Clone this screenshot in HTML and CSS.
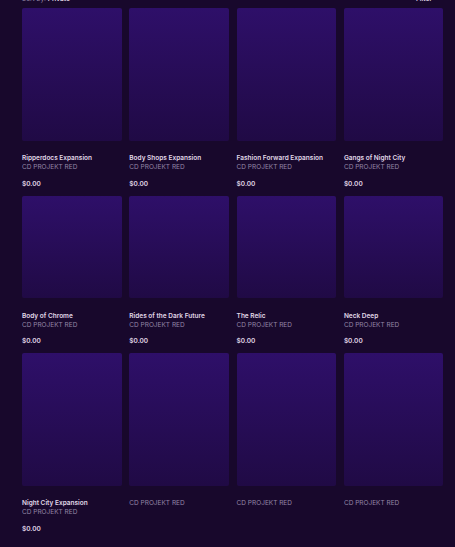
FILE: index.html
```html
<!DOCTYPE html>
<html lang="en">
<head>
<meta charset="utf-8">
<title>Add-ons</title>
<link rel="stylesheet" href="styles.css">
</head>
<body>
<header class="toolbar"><div><span class="muted">Sort by:</span> <b>Private</b></div><div class="filter"><b>Filter</b><svg class="chevron" viewBox="0 0 6 4"><path d="M1 1l2 2 2-2" fill="none" stroke="currentColor"/></svg></div></header>
<main class="grid">
<article class="card"><div class="cover"></div><h3>Ripperdocs Expansion</h3><p>CD PROJEKT RED</p><strong>$0.00</strong></article>
<article class="card"><div class="cover"></div><h3>Body Shops Expansion</h3><p>CD PROJEKT RED</p><strong>$0.00</strong></article>
<article class="card"><div class="cover"></div><h3>Fashion Forward Expansion</h3><p>CD PROJEKT RED</p><strong>$0.00</strong></article>
<article class="card"><div class="cover"></div><h3>Gangs of Night City</h3><p>CD PROJEKT RED</p><strong>$0.00</strong></article>
<article class="card short"><div class="cover"></div><h3>Body of Chrome</h3><p>CD PROJEKT RED</p><strong>$0.00</strong></article>
<article class="card short"><div class="cover"></div><h3>Rides of the Dark Future</h3><p>CD PROJEKT RED</p><strong>$0.00</strong></article>
<article class="card short"><div class="cover"></div><h3>The Relic</h3><p>CD PROJEKT RED</p><strong>$0.00</strong></article>
<article class="card short"><div class="cover"></div><h3>Neck Deep</h3><p>CD PROJEKT RED</p><strong>$0.00</strong></article>
<article class="card"><div class="cover"></div><h3>Night City Expansion</h3><p>CD PROJEKT RED</p><strong>$0.00</strong></article>
<article class="card"><div class="cover"></div><p>CD PROJEKT RED</p></article>
<article class="card"><div class="cover"></div><p>CD PROJEKT RED</p></article>
<article class="card"><div class="cover"></div><p>CD PROJEKT RED</p></article>
</main>
</body>
</html>
```
FILE: styles.css
```css
* { box-sizing: border-box; }
body {
  margin: 0;
  height: 547px;
  overflow: hidden;
  background: #18082c;
  color: #e0d8e8;
  font: 6.5px/9px Inter, "Liberation Sans", sans-serif;
}
.toolbar {
  display: flex;
  justify-content: space-between;
  height: 8px;
  margin-top: -5px;
  padding: 0 12px 0 22px;
}
.toolbar b { font-weight: 600; }
.muted { color: #9486a6; }
.filter {
  display: flex;
  align-items: center;
  gap: 6px;
}
.chevron {
  width: 5px;
  height: 3px;
  margin-top: -2px;
}
.grid {
  display: grid;
  grid-template-columns: repeat(4, 99.5px);
  grid-template-rows: 187.5px 157.5px 188px;
  column-gap: 7.8px;
  padding: 5px 0 0 22px;
}
.card { white-space: nowrap; }
.cover {
  height: 132.5px;
  margin-bottom: 13.5px;
  border-radius: 2px;
  background: linear-gradient(#2e0f69, #200a45);
}
.short .cover { height: 102.5px; }
h3 {
  margin: 0;
  font-size: 6.5px;
  line-height: 9px;
  font-weight: 600;
}
p {
  margin: 0;
  color: #9486a6;
  font-size: 6.5px;
  line-height: 9px;
}
strong {
  display: block;
  margin-top: 7.5px;
  font-size: 6.5px;
  line-height: 9px;
  font-weight: 600;
}
```
